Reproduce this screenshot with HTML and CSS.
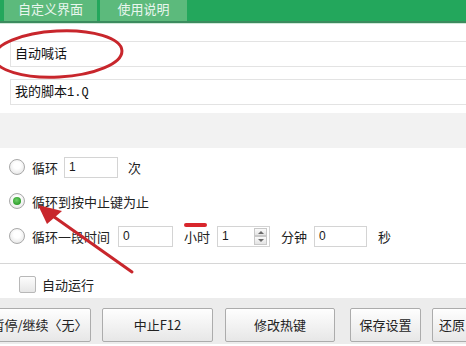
FILE: index.html
```html
<!DOCTYPE html>
<html lang="zh-CN">
<head>
<meta charset="utf-8">
<title>设置</title>
<link rel="stylesheet" href="styles.css">
</head>
<body>
<div class="page">
  <div class="header">
    <div class="tab tab-a">自定义界面</div>
    <div class="tab tab-b">使用说明</div>
  </div>
  <div class="fields">
    <div class="field">自动喊话</div>
    <div class="field">我的脚本<span class="mono">1.Q</span></div>
  </div>
  <div class="band"></div>
  <div class="options">
    <div class="row r1">
      <span class="radio"></span>
      <span class="label">循环</span>
      <span class="box b-count">1</span>
      <span class="unit u-ci">次</span>
    </div>
    <div class="row r2">
      <span class="radio checked"></span>
      <span class="label">循环到按中止键为止</span>
    </div>
    <div class="row r3">
      <span class="radio"></span>
      <span class="label">循环一段时间</span>
      <span class="box b-time">0</span>
      <span class="unit u-mid">小时</span>
      <span class="box b-spin">1<span class="spin"><span class="up"></span><span class="down"></span></span></span>
      <span class="unit u-mid">分钟</span>
      <span class="box b-spin">0</span>
      <span class="unit u-mid">秒</span>
    </div>
  </div>
  <div class="sep"></div>
  <div class="check-row">
    <span class="checkbox"></span>
    <span class="label">自动运行</span>
  </div>
  <div class="footer">
    <div class="btn btn1">暂停/继续〈无〉</div>
    <div class="btn btn2">中止F12</div>
    <div class="btn btn3">修改热键</div>
    <div class="btn btn4">保存设置</div>
    <div class="btn btn5">还原</div>
  </div>
  <svg class="marks" width="466" height="346" viewBox="0 0 466 346">
    <ellipse cx="58" cy="54" rx="64" ry="23" transform="rotate(-3 58 54)" fill="none" stroke="#c8262c" stroke-width="3"/>
    <line x1="132" y1="272" x2="50" y2="214" stroke="#c8262c" stroke-width="3" stroke-linecap="round"/>
    <polygon points="38,205 62,211 47,224" fill="#c8262c"/>
    <line x1="186" y1="225" x2="205" y2="225" stroke="#d8262c" stroke-width="4" stroke-linecap="round"/>
  </svg>
</div>
</body>
</html>
```
FILE: styles.css
```css
html, body {
  margin: 0;
  padding: 0;
}
body {
  width: 466px;
  height: 346px;
  overflow: hidden;
  background: #ffffff;
  font-family: "Noto Sans CJK SC", "Noto Sans", sans-serif;
  font-size: 13px;
  color: #1a1a1a;
}
.page {
  position: relative;
  width: 466px;
  height: 346px;
  overflow: hidden;
}
.header {
  height: 21px;
  background: #23a75c;
  border-bottom: 2px solid #3c8b5e;
  box-shadow: 0 1px 0 #cfe9d8;
  display: flex;
  padding-left: 4px;
  gap: 3px;
}
.tab {
  height: 21px;
  background: #5cba7c;
  color: #e9f6ee;
  line-height: 18px;
  text-align: center;
  font-size: 13px;
}
.tab-a { width: 93px; }
.tab-b { width: 87px; }
.fields {
  padding: 18px 0 0 10px;
  display: flex;
  flex-direction: column;
  gap: 12px;
}
.field {
  height: 26px;
  box-sizing: border-box;
  border: 1px solid #e3e3e3;
  border-right: none;
  padding-left: 4px;
  line-height: 22px;
  color: #111;
}
.mono {
  font-family: "Liberation Mono", monospace;
  font-size: 12px;
}
.band {
  margin-top: 8px;
  height: 35px;
  background: #f2f2f2;
}
.options {
  padding-top: 2px;
}
.row {
  display: flex;
  align-items: center;
  padding-left: 9px;
}
.r1 { height: 34px; }
.r2 { height: 34px; }
.r3 { height: 36px; }
.radio {
  width: 16px;
  height: 16px;
  box-sizing: border-box;
  border-radius: 50%;
  border: 1px solid #a8a8a8;
  background: radial-gradient(circle at 50% 40%, #ffffff 30%, #dedede 100%);
  position: relative;
}
.radio.checked::after {
  content: "";
  position: absolute;
  left: 3px;
  top: 3px;
  width: 8px;
  height: 8px;
  border-radius: 50%;
  background: radial-gradient(circle at 45% 40%, #6fd06a 0%, #2f9e2c 70%);
}
.label {
  margin-left: 7px;
  color: #222;
}
.box {
  height: 21px;
  box-sizing: border-box;
  border: 1px solid #d4d4d4;
  background: #fff;
  padding-left: 4px;
  line-height: 19px;
  font-size: 12px;
  font-family: "Liberation Sans", sans-serif;
  position: relative;
}
.b-count { width: 54px; margin-left: 6px; }
.b-time { width: 55px; margin-left: 8px; }
.b-spin { width: 53px; margin-left: 7px; }
.unit { color: #222; }
.u-ci { margin-left: 10px; }
.u-mid { margin-left: 11px; }
.spin {
  position: absolute;
  right: 2px;
  top: 1px;
  width: 13px;
  height: 17px;
  display: flex;
  flex-direction: column;
}
.spin .up, .spin .down {
  flex: 1;
  border: 1px solid #c8c8c8;
  background: linear-gradient(#fafafa, #e4e4e4);
  position: relative;
}
.spin .up::after, .spin .down::after {
  content: "";
  position: absolute;
  left: 3px;
  border-left: 3px solid transparent;
  border-right: 3px solid transparent;
}
.spin .up::after {
  top: 2px;
  border-bottom: 3px solid #6a6a6a;
}
.spin .down::after {
  top: 2px;
  border-top: 3px solid #6a6a6a;
}
.sep {
  margin-top: 9px;
  height: 1px;
  background: #d6d6d6;
}
.check-row {
  height: 34px;
  box-sizing: border-box;
  padding: 6px 0 0 19px;
  display: flex;
  align-items: center;
}
.checkbox {
  width: 17px;
  height: 17px;
  box-sizing: border-box;
  border: 1px solid #b8b8b8;
  border-radius: 2px;
  background: linear-gradient(#fdfdfd, #e6e6e6);
}
.check-row .label { margin-left: 6px; }
.footer {
  height: 46px;
  box-sizing: border-box;
  background: #ececec;
  padding-top: 10px;
  display: flex;
  gap: 11px;
}
.btn {
  flex: none;
  height: 34px;
  box-sizing: border-box;
  border: 1px solid #acacac;
  border-radius: 2px;
  background: linear-gradient(#fefefe, #e7e7e7);
  text-align: center;
  line-height: 31px;
  color: #222;
  white-space: nowrap;
}
.btn1 { width: 103px; margin-left: -12px; }
.btn2 { width: 111px; }
.btn3 { width: 110px; margin-left: 1px; }
.btn4 { width: 71px; margin-left: 4px; }
.btn5 { width: 70px; text-align: left; padding-left: 6px; }
.marks {
  position: absolute;
  left: 0;
  top: 0;
  pointer-events: none;
}
```
